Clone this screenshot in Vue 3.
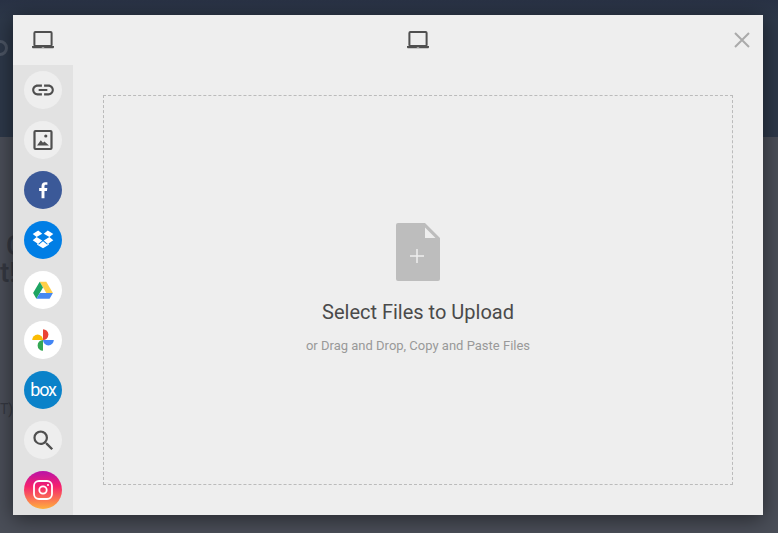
<script setup>
const sources = [
  { name: 'link', cls: 'plain' },
  { name: 'image', cls: 'plain' },
  { name: 'facebook', cls: 'fb' },
  { name: 'dropbox', cls: 'dbx' },
  { name: 'drive', cls: 'white' },
  { name: 'photos', cls: 'white' },
  { name: 'box', cls: 'boxco' },
  { name: 'search', cls: 'plain' },
  { name: 'instagram', cls: 'insta' },
]
</script>

<template>
  <div class="page">
    <header class="band">
      <span class="brand"></span>
    </header>
    <section class="under">
      <h1 class="big">C<br><span class="line2">t!</span></h1>
      <p class="small">T)</p>
    </section>

    <div class="modal">
      <div class="top">
        <div class="top-left">
          <svg class="laptop" viewBox="0 0 24 24" width="24" height="24">
            <rect x="3.4" y="4" width="17.2" height="14" rx="1" fill="none" stroke="#4f4f4f" stroke-width="2" />
            <path d="M1 18h9.800v1.400h2.400V18H23v1c0 .8-.5 1.300-1.300 1.300H2.300C1.500 20.300 1 19.800 1 19z" fill="#4f4f4f" />
          </svg>
        </div>
        <div class="top-title">
          <svg class="laptop" viewBox="0 0 24 24" width="24" height="24">
            <rect x="3.4" y="4" width="17.2" height="14" rx="1" fill="none" stroke="#4f4f4f" stroke-width="2" />
            <path d="M1 18h9.800v1.400h2.400V18H23v1c0 .8-.5 1.300-1.300 1.300H2.300C1.500 20.300 1 19.800 1 19z" fill="#4f4f4f" />
          </svg>
        </div>
        <button class="close" aria-label="Close">
          <svg viewBox="0 0 16 16" width="16" height="16">
            <path d="M1 1l14 14M15 1L1 15" stroke="#aaa" stroke-width="2" fill="none" />
          </svg>
        </button>
      </div>

      <div class="content">
        <aside class="side">
          <div v-for="s in sources" :key="s.name" class="source" :class="s.cls">
            <svg v-if="s.name === 'link'" viewBox="0 0 24 24" width="26" height="26">
              <path fill="#4f4f4f" d="M3.900 12c0-1.710 1.390-3.100 3.100-3.100h4V7H7c-2.760 0-5 2.240-5 5s2.240 5 5 5h4v-1.900H7c-1.710 0-3.100-1.390-3.100-3.100zM8 13h8v-2H8v2zm9-6h-4v1.900h4c1.710 0 3.100 1.390 3.100 3.100s-1.390 3.100-3.100 3.100h-4V17h4c2.760 0 5-2.240 5-5s-2.240-5-5-5z" />
            </svg>
            <svg v-else-if="s.name === 'image'" viewBox="0 0 24 24" width="24" height="24">
              <rect x="3.500" y="3" width="17" height="18" rx="1" fill="none" stroke="#4f4f4f" stroke-width="2.200" />
              <circle cx="14.800" cy="8" r="1.600" fill="#4f4f4f" />
              <path fill="#4f4f4f" d="M6 17.500l3.800-5.300 2.200 2.600 1.400-1.400 4.600 4.100z" />
            </svg>
            <svg v-else-if="s.name === 'facebook'" viewBox="0 0 24 24" width="22" height="22">
              <path fill="#fff" d="M13.600 21v-8h2.700l.4-3.200h-3.100V7.900c0-.9.300-1.500 1.600-1.500h1.600V3.600c-.3 0-1.300-.1-2.400-.1-2.400 0-4 1.400-4 4.100v2.200H7.800V13h2.600v8z" />
            </svg>
            <svg v-else-if="s.name === 'dropbox'" viewBox="0 0 24 24" width="24" height="24">
              <path fill="#fff" d="M7.200 2.500L1.700 6.100l3.900 3L11.200 5.700zM16.800 2.500l-4 3.200 5.600 3.400 3.900-3zM1.700 12.300l5.500 3.600 4-3.300-5.600-3.500zM18.400 9.100l-5.600 3.500 4 3.300 5.500-3.600zM12 13.300l-4 3.300-1.800-1.100v1.300L12 20.300l5.800-3.500v-1.300L16 16.600z" />
            </svg>
            <svg v-else-if="s.name === 'drive'" viewBox="0 0 24 24" width="22" height="22">
              <path fill="#ffcf48" d="M8.400 3h7.200l7.200 12.300h-7.200z" />
              <path fill="#1da462" d="M8.400 3L1.200 15.300l3.600 6.200L12 9.200z" />
              <path fill="#4688f1" d="M8.600 15.300h14.200l-3.600 6.200H4.800z" />
            </svg>
            <svg v-else-if="s.name === 'photos'" viewBox="0 0 24 24" width="24" height="24">
              <path fill="#ea4335" d="M12 1.200a5.400 5.400 0 0 1 0 10.800z" />
              <path fill="#4285f4" d="M22.800 12a5.400 5.400 0 0 1-10.800 0z" />
              <path fill="#34a853" d="M12 22.800a5.400 5.400 0 0 1 0-10.800z" />
              <path fill="#fbbc04" d="M1.200 12a5.400 5.400 0 0 1 10.800 0z" />
            </svg>
            <span v-else-if="s.name === 'box'" class="box-word">box</span>
            <svg v-else-if="s.name === 'search'" viewBox="0 0 24 24" width="27" height="27">
              <path fill="#4f4f4f" d="M15.500 14h-.79l-.28-.27A6.470 6.470 0 0 0 16 9.500 6.500 6.500 0 1 0 9.500 16c1.610 0 3.090-.59 4.230-1.570l.27.28v.79l5 4.990L20.490 19l-4.990-5zm-6 0C7.010 14 5 11.990 5 9.500S7.010 5 9.500 5 14 7.010 14 9.500 11.990 14 9.500 14z" />
            </svg>
            <svg v-else-if="s.name === 'instagram'" viewBox="0 0 24 24" width="24" height="24">
              <rect x="3" y="3" width="18" height="18" rx="5" fill="none" stroke="#fff" stroke-width="1.800" />
              <circle cx="12" cy="12" r="3.700" fill="none" stroke="#fff" stroke-width="1.800" />
              <circle cx="17" cy="7" r="1.100" fill="#fff" />
            </svg>
          </div>
        </aside>

        <main class="main">
          <div class="dropzone">
            <svg class="doc" viewBox="0 0 44 58" width="44" height="58">
              <path fill="#bdbdbd" d="M2 0h27l15 15v41a2 2 0 0 1-2 2H2a2 2 0 0 1-2-2V2a2 2 0 0 1 2-2z" />
              <path fill="#eee" d="M29 4.500L39.500 15H29z" />
              <path stroke="#eee" stroke-width="1.500" d="M21 26v14M14 33h14" />
            </svg>
            <div class="title">Select Files to Upload</div>
            <div class="hint">or Drag and Drop, Copy and Paste Files</div>
          </div>
        </main>
      </div>
    </div>
  </div>
</template>

<style>
body {
  margin: 0;
  overflow: hidden;
}
</style>

<style scoped>
.page {
  position: relative;
  width: 778px;
  height: 533px;
  overflow: hidden;
  background: #4a4e58;
  font-family: Roboto, "Liberation Sans", sans-serif;
  display: flex;
  flex-direction: column;
}

.band {
  height: 137px;
  flex: none;
  box-sizing: border-box;
  background: linear-gradient(#293245, #2d3849 20px);
  padding-top: 40px;
}

.brand {
  display: block;
  width: 16px;
  height: 16px;
  margin-left: -8px;
  box-sizing: border-box;
  border: 3px solid #4b5463;
  border-radius: 50%;
}

.under {
  flex: 1;
  padding: 95px 0 0 6px;
  color: #353841;
}

.big {
  margin: 0;
  font-size: 28px;
  line-height: 27px;
  font-weight: 500;
}

.line2 {
  margin-left: -6px;
}

.small {
  margin: 114px 0 0 -6px;
  font-size: 14px;
  line-height: 18px;
}

.modal {
  position: absolute;
  left: 13px;
  top: 15px;
  width: 750px;
  height: 500px;
  background: #eee;
  box-shadow: 0 4px 20px rgba(0, 0, 0, 0.5);
  display: flex;
  flex-direction: column;
}

.top {
  height: 50px;
  flex: none;
  display: flex;
  align-items: center;
}

.top-left {
  width: 60px;
  display: flex;
  justify-content: center;
}

.top-title {
  flex: 1;
  display: flex;
  justify-content: center;
}

.laptop,
.doc {
  display: block;
}

.close {
  position: absolute;
  right: 13px;
  top: 17px;
  width: 16px;
  height: 16px;
  padding: 0;
  border: 0;
  background: none;
}

.close svg {
  display: block;
}

.content {
  flex: 1;
  display: flex;
  min-height: 0;
}

.side {
  width: 60px;
  background: #e2e2e2;
  padding-top: 6px;
  box-sizing: border-box;
  display: flex;
  flex-direction: column;
  align-items: center;
  gap: 12px;
  overflow: hidden;
}

.source {
  width: 38px;
  height: 38px;
  flex: none;
  border-radius: 50%;
  display: flex;
  align-items: center;
  justify-content: center;
}

.plain {
  background: #eee;
}

.white {
  background: #fff;
}

.fb {
  background: #3b5998;
}

.dbx {
  background: #007ee5;
}

.boxco {
  background: #0b82c9;
}

.insta {
  background: linear-gradient(#b913a8 0%, #f5216e 40%, #ffb13d 100%);
}

.box-word {
  color: #fff;
  font-family: Roboto, "Liberation Sans", sans-serif;
  font-size: 18px;
  line-height: 1;
  letter-spacing: -1.2px;
}

.main {
  flex: 1;
  padding: 30px;
  display: flex;
}

.dropzone {
  flex: 1;
  border: 1px dashed #bbb;
  display: flex;
  flex-direction: column;
  align-items: center;
  padding-top: 127px;
}

.title {
  margin-top: 19px;
  font-size: 20px;
  line-height: 24px;
  color: #4a4a4a;
}

.hint {
  margin-top: 13px;
  font-size: 13px;
  line-height: 18px;
  color: #999;
}
</style>
